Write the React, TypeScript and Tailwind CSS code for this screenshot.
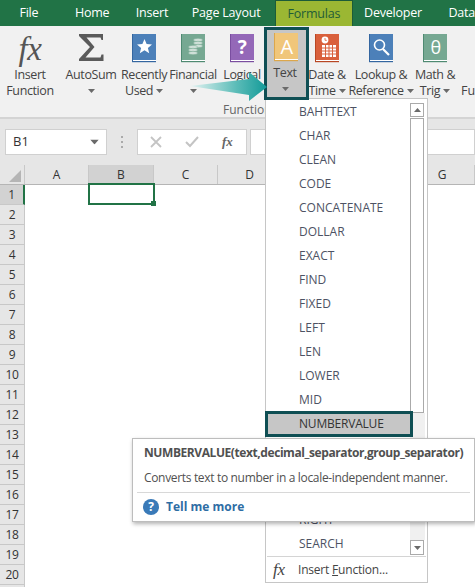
const font = "font-['Open_Sans','Noto_Sans',sans-serif]";

function Caret({ className = "" }: { className?: string }) {
  return (
    <svg width="7" height="4" viewBox="0 0 7 4" className={className}>
      <path d="M0 0h7L3.5 4z" fill="#6a6a6a" />
    </svg>
  );
}

function Book({ color, spine, children }: { color: string; spine: string; children?: React.ReactNode }) {
  return (
    <svg width="24" height="29" viewBox="0 0 24 29" className="block">
      <rect x="0" y="0" width="24" height="26" fill={color} />
      <rect x="0" y="0" width="1" height="28" fill={spine} />
      <rect x="1" y="26" width="23" height="1" fill="#fff" />
      <rect x="0" y="27" width="24" height="1.2" fill={spine} />
      {children}
    </svg>
  );
}

const star = <path d="M12.5 5l2.1 5 5.4.4-4.1 3.5 1.3 5.3-4.7-2.9-4.7 2.9 1.3-5.3L5 10.4l5.4-.4z" fill="#fff" />;
const coins = (
  <g fill="#cfe0d8" stroke="#74a890" strokeWidth="0.5">
    <ellipse cx="17" cy="6" rx="4.5" ry="1.7" />
    <ellipse cx="17" cy="9" rx="4.5" ry="1.7" />
    <ellipse cx="17" cy="12" rx="4.5" ry="1.7" />
    <ellipse cx="12" cy="13" rx="4.5" ry="1.7" />
    <ellipse cx="12" cy="16" rx="4.5" ry="1.7" />
    <ellipse cx="12" cy="19" rx="4.5" ry="1.7" />
  </g>
);
const calendar = (
  <g>
    <circle cx="10" cy="6" r="3.4" fill="#fff" />
    <path d="M10 4v2.3h1.8" stroke="#d9603c" strokeWidth="0.8" fill="none" />
    <path d="M7 11h14v12H7z" fill="#fff" />
    <path d="M7 14h14M7 17h14M7 20h14M10.5 11v12M14 11v12M17.5 11v12" stroke="#d9603c" strokeWidth="1" />
  </g>
);
const lens = (
  <g fill="none" stroke="#fff" strokeWidth="1.6">
    <circle cx="10.5" cy="11" r="5" />
    <path d="M14 15l6 6" strokeWidth="2.2" />
  </g>
);

function RibbonItem({
  w,
  icon,
  lines,
  caretInline,
  caretBelow,
}: {
  w: string;
  icon?: React.ReactNode;
  lines: string[];
  caretInline?: boolean;
  caretBelow?: boolean;
}) {
  return (
    <div className={`${w} shrink-0 flex flex-col items-center text-[12.5px] tracking-[-0.4px] leading-[16px] text-[#444]`}>
      <div className="h-[33px] mt-[8px] flex items-start justify-center">{icon}</div>
      <div className="h-[16px] whitespace-nowrap">{lines[0]}</div>
      {lines[1] && (
        <div className="h-[16px] whitespace-nowrap flex items-center gap-[3px]">
          {lines[1]}
          {caretInline && <Caret />}
        </div>
      )}
      {caretBelow && (
        <div className="h-[16px] flex items-center">
          <Caret />
        </div>
      )}
    </div>
  );
}

const funcs = ["BAHTTEXT", "CHAR", "CLEAN", "CODE", "CONCATENATE", "DOLLAR", "EXACT", "FIND", "FIXED", "LEFT", "LEN", "LOWER", "MID"];
const rows = Array.from({ length: 20 }, (_, i) => i + 1);
const cols = [
  { n: "A", w: "w-[64px]" },
  { n: "B", w: "w-[65px]" },
  { n: "C", w: "w-[64px]" },
  { n: "D", w: "w-[64px]" },
  { n: "E", w: "w-[64px]" },
  { n: "F", w: "w-[64px]" },
  { n: "G", w: "w-[65px]" },
];

export default function App() {
  return (
    <div className={`relative w-[475px] h-[587px] overflow-hidden bg-white ${font}`}>
      {/* Tabs */}
      <div className="h-[26px] bg-[#217346] flex text-[12.5px] tracking-[-0.2px] text-white leading-[26px] whitespace-nowrap">
        <div className="w-[58px] text-center">File</div>
        <div className="w-[69px] text-center">Home</div>
        <div className="w-[51px] text-center">Insert</div>
        <div className="w-[98px] text-center">Page Layout</div>
        <div className="w-[78px] bg-[#9bb733] border border-b-0 border-[#1c5c38] text-center text-[#1f5c38]">Formulas</div>
        <div className="w-[81px] text-center">Developer</div>
        <div className="ml-[15px]">Data</div>
      </div>

      {/* Ribbon */}
      <div className="h-[93px] bg-[#f1f1f1] border-b-2 border-[#d4d4d4] flex relative">
        <RibbonItem w="w-[60px]" lines={["Insert", "Function"]} icon={<span className="font-['Liberation_Serif',serif] italic text-[33px] leading-[30px] text-[#555]">fx</span>} />
        <div className="w-px h-[55px] mt-[10px] bg-[#d4d4d4]" />
        <RibbonItem w="w-[62px]" lines={["AutoSum"]} caretBelow icon={
          <svg width="25" height="27" viewBox="0 0 25 27"><path d="M1 0h23v6h-1.500l-1-2.500H7.500l8 9.500-9 10.500h15l1-3h2V27H0v-2l11-12L0 2V0z" fill="#5a5a5a" /></svg>
        } />
        <RibbonItem w="w-[44px]" lines={["Recently", "Used"]} caretInline icon={<Book color="#4c80b9" spine="#3466a0">{star}</Book>} />
        <RibbonItem w="w-[54px]" lines={["Financial"]} caretBelow icon={<Book color="#76a892" spine="#4f8a72">{coins}</Book>} />
        <RibbonItem w="w-[44px]" lines={["Logical"]} caretBelow icon={
          <Book color="#9468b8" spine="#7a4ea0"><text x="12" y="20" fontSize="19" fontWeight="700" textAnchor="middle" fill="#fff" fontFamily="Open Sans">?</text></Book>
        } />
        <div className="w-[45px] h-[73px] mt-[1px] shrink-0 bg-[#c6c6c6] border-[3px] border-[#0f4f54] flex flex-col items-center text-[12.5px] tracking-[-0.4px] leading-[16px] text-[#444] z-20">
          <div className="h-[33px] mt-[3px] mr-[2px]">
            <Book color="#f0c67a" spine="#dca74c"><text x="12.5" y="21" fontSize="20" textAnchor="middle" fill="#fff" fontFamily="Open Sans">A</text></Book>
          </div>
          <div className="h-[16px] mr-[3px]">Text</div>
          <div className="h-[16px] flex items-center mr-[3px]"><Caret /></div>
        </div>
        <RibbonItem w="w-[36px]" lines={["Date &", "Time"]} caretInline icon={<Book color="#d9603c" spine="#b84724">{calendar}</Book>} />
        <RibbonItem w="w-[72px]" lines={["Lookup &", "Reference"]} caretInline icon={<Book color="#4c80b9" spine="#3466a0">{lens}</Book>} />
        <RibbonItem w="w-[36px]" lines={["Math &", "Trig"]} caretInline icon={
          <Book color="#76a892" spine="#4f8a72"><text x="12.5" y="20" fontSize="18" textAnchor="middle" fill="#fff" fontFamily="Open Sans">θ</text></Book>
        } />
        <div className="text-[12.5px] leading-[16px] text-[#444] mt-[57px] ml-[8px]">Fu</div>
        <div className="absolute left-[223px] top-[76px] text-[12px] leading-[16px] text-[#666]">Function</div>
      </div>

      {/* Formula bar */}
      <div className="h-[46px] bg-[#e6e6e6] flex items-start pt-[10px]">
        <div className="ml-[5px] w-[102px] h-[26px] bg-white border border-[#d0d0d0] flex items-center justify-between px-[7px] text-[13px] text-[#333]">
          <span>B1</span>
          <Caret className="mr-[1px] scale-125" />
        </div>
        <div className="ml-[14px] w-[3px] mt-[7px] flex flex-col gap-[3px]">
          <div className="w-[2px] h-[2px] bg-[#aaa]" />
          <div className="w-[2px] h-[2px] bg-[#aaa]" />
          <div className="w-[2px] h-[2px] bg-[#aaa]" />
        </div>
        <div className="ml-[13px] w-[110px] h-[26px] bg-white border border-[#d0d0d0] flex items-center">
          <svg width="12" height="12" viewBox="0 0 12 12" className="ml-[12px]"><path d="M1 1l10 10M11 1L1 11" stroke="#c4c4c4" strokeWidth="1.8" /></svg>
          <svg width="14" height="12" viewBox="0 0 14 12" className="ml-[23px]"><path d="M1 6l4 4 8-9" stroke="#c4c4c4" strokeWidth="2" fill="none" /></svg>
          <span className="ml-[23px] font-['Liberation_Serif',serif] italic font-bold text-[13px] text-[#666]">fx</span>
        </div>
        <div className="ml-[3px] flex-1 h-[26px] bg-white border border-[#d0d0d0]" />
      </div>

      {/* Sheet */}
      <div className="flex h-[20px] bg-[#e6e6e6] border-b border-[#b5b5b5]">
        <div className="w-[25px] relative border-r border-[#c8c8c8]">
          <svg width="12" height="12" viewBox="0 0 12 12" className="absolute right-[3px] bottom-[2px]"><path d="M12 0v12H0z" fill="#b5b5b5" /></svg>
        </div>
        {cols.map((c) => (
          <div key={c.n} className={`${c.w} shrink-0 text-center text-[12px] leading-[19px] text-[#333] border-r border-[#c8c8c8] ${c.n === "B" ? "bg-[#d2d2d2]" : ""}`}>
            {c.n}
          </div>
        ))}
      </div>
      <div className="flex">
        <div className="w-[25px] bg-[#e6e6e6]">
          {rows.map((r) => (
            <div key={r} className={`h-[20px] text-center text-[12px] tracking-[-0.4px] leading-[20px] border-r border-b border-[#c8c8c8] text-[#333] ${r === 1 ? "bg-[#d2d2d2] text-[#1f6b42] border-r-2 border-r-[#217346]" : ""}`}>
              {r}
            </div>
          ))}
          <div className="h-[2px] border-r border-[#c8c8c8]" />
        </div>
        <div className="flex-1 bg-white">
          <div className="relative ml-[63px] mt-[-2px] w-[67px] h-[22px] border-2 border-[#217346]">
            <div className="absolute right-[-3px] bottom-[-3px] w-[5px] h-[5px] bg-[#217346]" />
          </div>
        </div>
      </div>

      {/* Arrow */}
      <svg width="78" height="30" viewBox="0 0 78 30" className="absolute left-[190px] top-[72px] z-30">
        <defs>
          <linearGradient id="arrowFill" x1="0" x2="1" y1="0" y2="0">
            <stop offset="0" stopColor="#e4f3f2" />
            <stop offset="0.6" stopColor="#5cbcb8" />
            <stop offset="1" stopColor="#129a98" />
          </linearGradient>
        </defs>
        <path d="M0 14L59 7V0L77 15L59 29V23z" fill="url(#arrowFill)" />
      </svg>

      {/* Menu */}
      <div className="absolute left-[265px] top-[98px] w-[163px] h-[485px] bg-white border border-[#c6c6c6] z-10 flex flex-col text-[12px] text-[#4d5263]">
        <div className="h-[458px] relative">
          <div className="pt-[1px]">
            {funcs.map((f) => (
              <div key={f} className="h-[24px] leading-[24px] pl-[33px] whitespace-nowrap">{f}</div>
            ))}
            <div className="relative z-10 h-[26px] my-[-1px] ml-[-1px] leading-[20px] pl-[31px] w-[148px] bg-[#c6c6c6] border-[3px] border-[#0f4f54] text-[#333] tracking-[-0.2px]">NUMBERVALUE</div>
            <div className="h-[24px] mt-[72px] leading-[24px] pl-[33px]">RIGHT</div>
            <div className="h-[24px] leading-[24px] pl-[33px]">SEARCH</div>
          </div>
          <div className="absolute right-[2px] top-0 bottom-0 w-[15px] pt-[4px]">
            <div className="h-[14px] w-[14px] bg-white border border-[#aaa] flex items-center justify-center">
              <Caret className="rotate-180" />
            </div>
            <div className="h-[295px] w-[14px] bg-white border border-[#aaa] mt-[1px]" />
            <div className="h-[127px] bg-[#f0f0f0]" />
            <div className="h-[15px] w-[14px] bg-white border border-[#aaa] flex items-center justify-center">
              <Caret />
            </div>
          </div>
        </div>
        <div className="flex-1 mx-[1px] border-t border-[#d4d4d4] flex items-center text-[12px] text-[#444] tracking-[-0.2px]">
          <span className="ml-[6px] w-[25px] font-['Liberation_Serif',serif] italic text-[17px] text-[#444]">fx</span>
          <span>Insert <span className="underline">F</span>unction...</span>
        </div>
      </div>

      {/* Tooltip */}
      <div className="absolute left-[132px] top-[438px] w-[343px] h-[84px] bg-white border border-[#bdbdbd] shadow-[1px_2px_4px_rgba(0,0,0,0.3)] z-30">
        <div className="pl-[11px] pt-[6px] text-[12px] tracking-[-0.42px] leading-[16px] font-bold text-[#505050] whitespace-nowrap">NUMBERVALUE(text,decimal_separator,group_separator)</div>
        <div className="pl-[11px] mt-[9px] text-[12px] tracking-[-0.33px] leading-[16px] text-[#505050] whitespace-nowrap">Converts text to number in a locale-independent manner.</div>
        <div className="mx-[4px] mt-[6px] border-t border-[#d8d8d8]" />
        <div className="flex items-center pl-[10px] mt-[6px]">
          <span className="w-[16px] h-[16px] rounded-full bg-[#3a7ab8] text-white text-[12px] leading-[16px] font-bold text-center">?</span>
          <span className="ml-[7px] text-[12px] leading-[16px] font-bold text-[#2e6da4]">Tell me more</span>
        </div>
      </div>
    </div>
  );
}
